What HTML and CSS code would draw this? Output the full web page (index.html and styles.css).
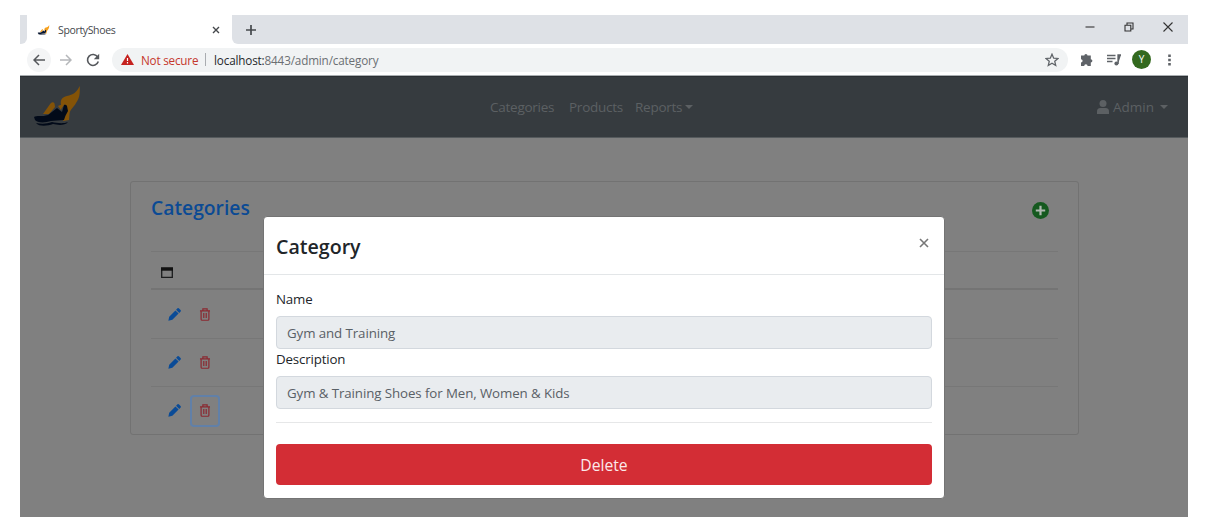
FILE: index.html
```html
<!DOCTYPE html>
<html lang="en">
<head>
<meta charset="utf-8">
<title>SportyShoes</title>
<link rel="stylesheet" href="styles.css">
</head>
<body>
<svg class="defs" width="0" height="0">
  <symbol id="shoe" viewBox="0 0 46 40">
    <path class="flame" d="M9 28 16.500 17.500q2.500-2.500 4 0L21 21l-6 7zM24 20l5-2-2 6zM27 19c-1-5 1-8 6-9 6-1 10-4 12.700-10C46 6 46 12 42 17c-2 4-6 6-6.500 11l-.5 6-6 1 3-9-1-8-4 5z"/>
    <path class="sole" d="M0 31c2-2 8 0 14-2l9-7 5 4 2-7q2-1 3 1l1 5q-3 5-4 9l-13 1c-6 2-14 2-16-1z"/>
    <path class="sole" d="M2 37c6 1 10 1 16-1 5 1 11 2 16 0-3 4-11 3-15 2-5 2-14 3-17-1z"/>
  </symbol>
  <symbol id="pencil" viewBox="0 0 14 14">
    <path d="M.4 13.600 1.300 9.300 8 2.600 11.400 6 4.700 12.700zM8.700 1.900 10.200.4q.9-.7 1.700.1l1.600 1.600q.8.800.1 1.700L12.100 5.300z"/>
  </symbol>
  <symbol id="trash" viewBox="0 0 12 14">
    <path d="M.6 3h10.800M3.700 2.700V.9h4.600v1.800M1.800 3v9.200q0 1 1 1h6.400q1 0 1-1V3M4.700 5.300v5.500M7.300 5.300v5.500" fill="none" stroke="currentColor" stroke-width="1.300"/>
  </symbol>
</svg>
<div class="window">
  <div class="tabbar">
    <div class="tab-edge"></div>
    <div class="tab">
      <svg class="favicon"><use href="#shoe"/></svg>
      <span class="tab-title">SportyShoes</span>
      <svg class="tab-close" viewBox="0 0 8 8"><path d="M1 1l6 6M7 1 1 7"/></svg>
    </div>
    <div class="tab-rest">
      <svg class="plus" viewBox="0 0 12 12"><path d="M6 1v10M1 6h10"/></svg>
      <div class="controls">
        <svg viewBox="0 0 10 10"><path d="M.5 5h9"/></svg>
        <svg viewBox="0 0 10 10"><path d="M1 3.200h5.800V9H1zM3 3V1h6v6H7"/></svg>
        <svg viewBox="0 0 10 10"><path d="M.5.500l9 9M9.500.500l-9 9"/></svg>
      </div>
    </div>
  </div>
  <div class="toolbar">
    <span class="back"><svg viewBox="0 0 12 12"><path d="M12 6H1M6 1 1 6l5 5"/></svg></span>
    <svg class="forward" viewBox="0 0 12 12"><path d="M0 6h11M6 1l5 5-5 5"/></svg>
    <svg class="reload" viewBox="0 0 14 14"><path d="M11.700 4A5.500 5.500 0 1 0 12.300 8.600"/><path class="solid" d="M13.200.8v5.400H7.800z"/></svg>
    <div class="address">
      <svg class="warn" viewBox="0 0 13 11"><path d="M6.500 0 13 11H0z"/><path class="mark" d="M6.500 4v3M6.500 8v1.400"/></svg>
      <span class="insecure">Not secure</span>
      <span class="bar"></span>
      <span class="url"><b>localhost:</b>8443/admin/category</span>
      <svg class="star" viewBox="0 0 12 12"><path d="M6 1l1.450 3.400 3.700.3-2.800 2.400.85 3.600L6 8.800l-3.200 1.900.85-3.600L.85 4.700l3.700-.3z"/></svg>
    </div>
    <svg class="puzzle" viewBox="0 0 13 13"><path d="M1 2.600h3.300a1.600 1.600 0 1 1 3.200 0h3.300v3.600a1.600 1.600 0 1 1 0 3.200V13H7.600a1.700 1.700 0 0 0-3.400 0H1V9.400a1.600 1.600 0 0 0 0-3.200z"/></svg>
    <svg class="playlist" viewBox="0 0 14 12"><path d="M0 1.500h8.500M0 4.500h8.500M0 7.500h5.500M11 10V1h3"/><circle cx="9.400" cy="9.500" r="2"/></svg>
    <span class="avatar">Y</span>
    <svg class="dots" viewBox="0 0 3 12"><path d="M.2.500h2.600v2.600H.2zM.2 4.700h2.600v2.600H.2zM.2 8.900h2.600v2.600H.2z"/></svg>
  </div>
  <div class="page">
    <nav class="navbar">
      <svg class="logo"><use href="#shoe"/></svg>
      <div class="links">
        <span class="l-cat">Categories</span><span class="l-prod">Products</span><span class="l-rep">Reports</span><i class="caret"></i>
      </div>
      <div class="admin">
        <svg viewBox="0 0 12 14"><circle cx="6" cy="3.500" r="3.500"/><path d="M0 14v-2.500Q0 8 3.300 8h5.400Q12 8 12 11.500V14z"/></svg>
        <span>Admin</span><i class="caret"></i>
      </div>
    </nav>
    <section class="card">
      <header class="card-head">
        <h1>Categories</h1>
        <svg viewBox="0 0 17 17"><circle cx="8.500" cy="8.500" r="8.500"/><path d="M8.500 3.800v9.400M3.800 8.500h9.400"/></svg>
      </header>
      <div class="thead"><svg viewBox="0 0 12 11"><path d="M.7 1.400h10.600v9H.7z"/><path class="top" d="M0 .3h12v3.400H0z"/></svg></div>
      <div class="row"><svg class="edit"><use href="#pencil"/></svg><span class="del"><svg><use href="#trash"/></svg></span></div>
      <div class="row"><svg class="edit"><use href="#pencil"/></svg><span class="del"><svg><use href="#trash"/></svg></span></div>
      <div class="row"><svg class="edit"><use href="#pencil"/></svg><span class="del focused"><svg><use href="#trash"/></svg></span></div>
    </section>
    <div class="modal">
      <header class="modal-head">
        <h2>Category</h2>
        <svg viewBox="0 0 10 10"><path d="M1 1l8 8M9 1 1 9"/></svg>
      </header>
      <div class="modal-body">
        <label>Name</label>
        <div class="field"><span class="t-gym">Gym and Training</span></div>
        <label>Description</label>
        <div class="field"><span class="t-long">Gym &amp; Training Shoes for Men, Women &amp; Kids</span></div>
        <div class="rule"></div>
        <div class="delete">Delete</div>
      </div>
    </div>
  </div>
</div>
</body>
</html>
```
FILE: styles.css
```css
* { box-sizing: border-box; }
body { margin: 0; background: #fff; font-family: "Open Sans", "Noto Sans", sans-serif; overflow: hidden; }
svg { display: block; flex: none; }
.defs { position: absolute; }
.flame { fill: #f7a01b; }
.sole { fill: #06142e; }
h1, h2 { margin: 0; font-weight: 600; }
.window { width: 1168px; height: 502px; margin: 15px 0 0 20px; display: flex; flex-direction: column; }

.tabbar { height: 29px; display: flex; background: #fff; }
.tab-edge { width: 7px; background: #dee1e6; border-bottom-right-radius: 6px; }
.tab { width: 205px; background: #fff; border-radius: 6px 6px 0 0; display: flex; align-items: center; padding: 0 11px 0 10px; }
.favicon { width: 13px; height: 10px; }
.tab-title { margin-left: 8px; font-size: 10.500px; letter-spacing: -0.35px; color: #45484c; flex: 1; }
.tab-close { width: 8px; height: 8px; margin-right: 1px; fill: none; stroke: #45484c; stroke-width: 1.400; }
.tab-rest { flex: 1; background: #dee1e6; border-bottom-left-radius: 6px; display: flex; align-items: center; justify-content: space-between; padding: 0 15px 0 13px; }
.plus { width: 12px; height: 12px; fill: none; stroke: #45484c; stroke-width: 1.700; }
.controls { display: flex; gap: 29px; margin-bottom: 5px; }
.controls svg { width: 10px; height: 10px; fill: none; stroke: #333; stroke-width: 1.100; }

.toolbar { height: 32px; border-bottom: 1px solid #a9aeb1; display: flex; align-items: center; padding: 0 17px 0 7px; color: #5f6368; }
.back { width: 24px; height: 24px; border-radius: 50%; background: #f4f5f6; display: flex; align-items: center; justify-content: center; }
.back svg, .forward { width: 12px; height: 12px; fill: none; stroke: #55585c; stroke-width: 1.500; }
.forward { margin-left: 9px; stroke: #b5b7ba; }
.reload { width: 14px; height: 14px; margin-left: 14px; fill: none; stroke: #55585c; stroke-width: 1.600; }
.reload .solid { fill: #55585c; stroke: none; }
.address { width: 956px; height: 24px; margin-left: 12px; border-radius: 12px; background: #f1f3f4; display: flex; align-items: center; padding: 0 9px 0 9px; font-size: 11.700px; }
.warn { width: 13px; height: 11px; fill: #c5221f; }
.warn .mark { stroke: #fff; stroke-width: 1.200; }
.insecure { color: #c5372c; margin-left: 7px; width: 57px; white-space: nowrap; letter-spacing: -0.2px; }
.bar { width: 1px; height: 13px; background: #a9acb0; margin: 0 8px 0 7px; }
.url { flex: 1; letter-spacing: -0.15px; color: #6b6f73; }
.url b { font-weight: 400; color: #26282b; }
.star { width: 14px; height: 14px; fill: none; stroke: #5f6368; stroke-width: 1.100; }
.puzzle { width: 13px; height: 13px; margin-left: 12px; fill: #5f6368; }
.playlist { width: 14px; height: 12px; margin-left: 14px; fill: #5f6368; stroke: #5f6368; stroke-width: 1.300; }
.playlist circle { stroke: none; }
.avatar { width: 19px; height: 19px; margin-left: 11px; border-radius: 50%; background: #33691e; color: #fff; font-size: 10px; line-height: 19px; text-align: center; }
.dots { width: 3px; height: 12px; margin-left: 17px; fill: #5f6368; }

.page { flex: 1; position: relative; background: #808080; }
.navbar { height: 62px; border: solid #2b2f33; border-width: 1px 0; border-bottom-color: #555a5d; background: #363b3f; color: #5c6063; display: flex; align-items: center; font-size: 13.500px; }
.logo { width: 46px; height: 40px; margin: -3px 0 0 14px; filter: brightness(.52) saturate(1.100); }
.links { flex: 1; display: flex; align-items: center; margin-left: 410px; }
.links span { white-space: nowrap; letter-spacing: -0.25px; }
.l-cat { width: 79px; }
.l-prod { width: 66px; }
.l-rep { width: 50px; }
.caret { border: 4px solid transparent; border-top-color: currentColor; border-bottom: 0; }
.admin { display: flex; align-items: center; padding-right: 20px; }
.admin svg { width: 12px; height: 14px; fill: currentColor; margin-right: 4px; }
.admin span { width: 47px; font-size: 13.500px; white-space: nowrap; }

.card { width: 949px; height: 254px; margin: 43px 0 0 110px; border: 1px solid #727272; border-radius: 3px; padding: 0 20px; }
.card-head { height: 69px; display: flex; justify-content: space-between; padding: 13px 9px 0 0; }
.card-head h1 { font-size: 19.300px; line-height: 26px; color: #0b4a94; letter-spacing: 0; }
.card-head svg { width: 17px; height: 17px; margin-top: 7px; fill: #15591f; stroke: none; }
.card-head path { stroke: #b0b8b1; stroke-width: 2.200; }
.thead { height: 39px; border-top: 1px solid #777; border-bottom: 2px solid #747474; padding: 15px 0 0 10px; }
.thead svg { width: 12px; height: 11px; fill: none; stroke: #1c1d1e; stroke-width: 1.300; }
.thead .top { fill: #111; stroke: none; }
.row { height: 48px; display: flex; align-items: center; padding-left: 17px; }
.row + .row { border-top: 1px solid #777; }
.edit { width: 13px; height: 13px; fill: #0a4b97; }
.del { width: 30px; height: 32px; margin-left: 9px; border-radius: 4px; display: flex; align-items: center; justify-content: center; color: #8a2931; }
.del svg { width: 12px; height: 13px; }
.focused { box-shadow: inset 0 0 0 2px #6180a8; }

.modal { position: absolute; left: 243px; top: 140px; width: 682px; height: 283px; background: #fff; border: 1px solid #747474; border-radius: 4px; color: #212529; }
.modal-head { height: 58px; border-bottom: 1px solid #e3e6e8; display: flex; justify-content: space-between; padding: 17px 15px 0 12px; }
.modal-head h2 { font-size: 19.600px; line-height: 26px; letter-spacing: 0; }
.modal-head svg { width: 10px; height: 10px; margin-top: 4px; fill: none; stroke: #777; stroke-width: 1.600; }
.modal-body { padding: 14px 12px; font-size: 13.300px; }
.modal-body label { display: block; height: 27px; line-height: 21px; letter-spacing: -0.15px; }
.field { width: 656px; height: 33px; border: 1px solid #d3d8de; border-radius: 4px; background: #e9ecef; color: #596066; padding-left: 10px; line-height: 32px; }
.modal-body .field span { letter-spacing: -0.09px; white-space: nowrap; }
.rule { height: 1px; background: #e6e7e8; margin: 13px 0 21px; }
.delete { width: 656px; height: 41px; border-radius: 4px; background: #d32d35; color: #fbe9ea; font-size: 15.700px; line-height: 43px; text-align: center; }
```
